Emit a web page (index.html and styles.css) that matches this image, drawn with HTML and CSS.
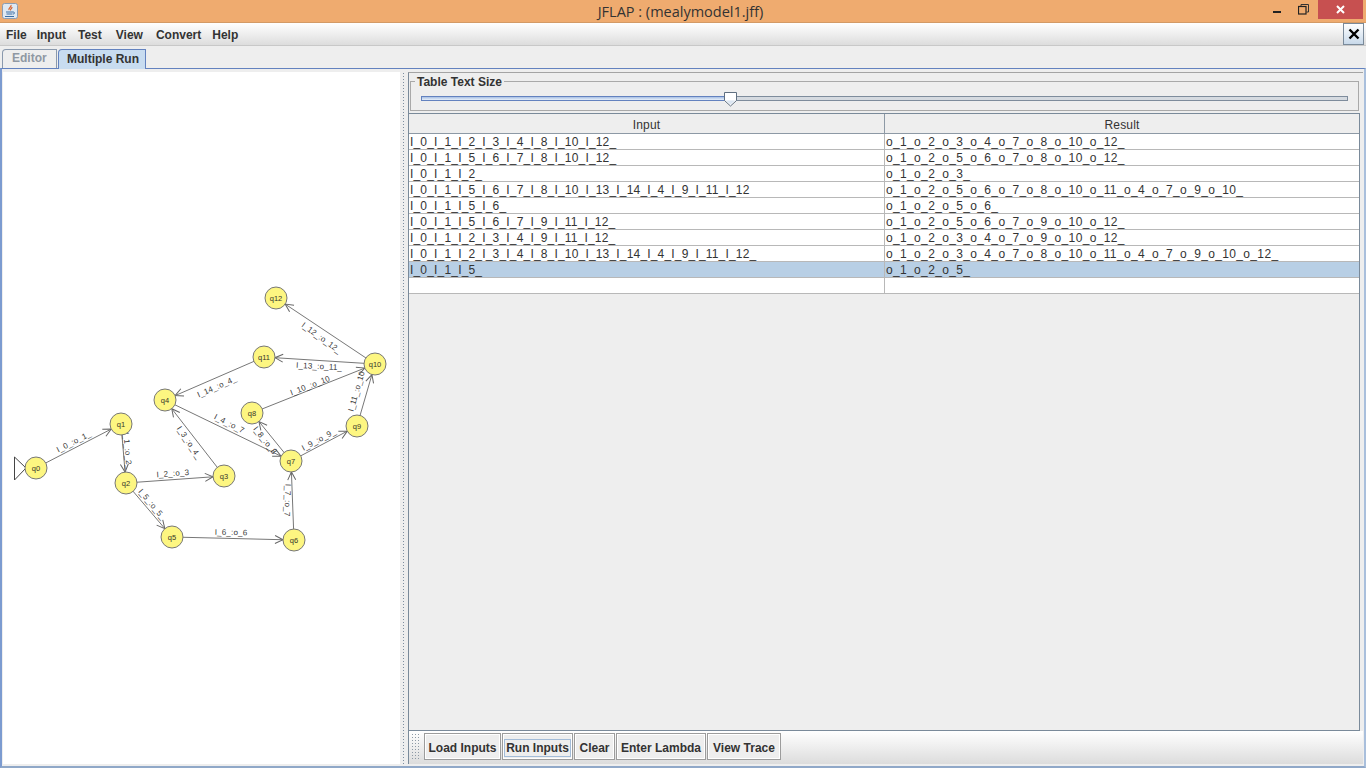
FILE: index.html
```html
<!DOCTYPE html>
<html lang="en">
<head>
  <meta charset="UTF-8">
  <title>JFLAP : (mealymodel1.jff)</title>
  <link rel="stylesheet" href="styles.css">
</head>
<body>
  <div class="window">
    <div class="title-bar">
      <svg class="app-icon" width="16" height="16" viewBox="0 0 16 16">
        <rect x="0.5" y="0.5" width="15" height="15" rx="2" fill="#dfe8f2" stroke="#8b9db3"/>
        <path d="M9 2c1 2-3 3-2 5M10 4c0 2-2 2-1.500 3.500" fill="none" stroke="#d8602a" stroke-width="1.200"/>
        <path d="M4 9h7M4.500 11h6M3 13.500h9" fill="none" stroke="#3a6ea5" stroke-width="1.200"/>
        <path d="M11 9c2 0 2 2 0 2" fill="none" stroke="#3a6ea5"/>
      </svg>
      <span class="title-text">JFLAP : (mealymodel1.jff)</span>
      <div class="win-controls">
        <span class="win-min"></span>
        <svg class="win-restore" width="11" height="11" viewBox="0 0 11 11">
          <path d="M3 2.500V.5h7.500V8H8.500" fill="none" stroke="#333"/>
          <rect x="0.500" y="2.500" width="7.500" height="7.500" fill="none" stroke="#222" stroke-width="1.200"/>
        </svg>
        <span class="win-close">
          <svg width="9" height="9" viewBox="0 0 9 9"><path d="M1 1l7 7M8 1l-7 7" stroke="#fff" stroke-width="2"/></svg>
        </span>
      </div>
    </div>

    <div class="menu-bar">
      <span class="menu-item">File</span>
      <span class="menu-item">Input</span>
      <span class="menu-item">Test</span>
      <span class="menu-item">View</span>
      <span class="menu-item">Convert</span>
      <span class="menu-item">Help</span>
      <button class="close-doc">
        <svg width="12" height="12" viewBox="0 0 12 12"><path d="M1.500 1.500l9 9M10.500 1.500l-9 9" stroke="#000" stroke-width="2.400"/></svg>
      </button>
    </div>

    <div class="tab-row">
      <span class="tab tab-off">Editor</span>
      <span class="tab tab-on">Multiple Run</span>
    </div>

    <div class="tab-panel">
      <div class="canvas-pane">
        <svg class="diagram" width="397" height="693" viewBox="3 72 397 693">
          <defs>
            <marker id="arrow" markerUnits="userSpaceOnUse" orient="auto" overflow="visible" refX="0" refY="0" markerWidth="10" markerHeight="10">
              <path d="M-19,-4 L-11,0 L-19,4" fill="none" stroke="#666"/>
            </marker>
          </defs>

          <path class="start" d="M14.500 457 L26 468 L14.500 480 Z"/>

          <line class="edge" x1="36" y1="468" x2="121" y2="424"/>
          <line class="edge" x1="121" y1="424" x2="126" y2="483"/>
          <line class="edge" x1="126" y1="483" x2="224" y2="476"/>
          <line class="edge" x1="126" y1="483" x2="172" y2="537"/>
          <line class="edge" x1="224" y1="476" x2="165" y2="400"/>
          <line class="edge" x1="165" y1="400" x2="291" y2="461"/>
          <line class="edge" x1="172" y1="537" x2="294" y2="540"/>
          <line class="edge" x1="294" y1="540" x2="291" y2="461"/>
          <line class="edge" x1="291" y1="461" x2="252" y2="413"/>
          <line class="edge" x1="291" y1="461" x2="357" y2="426"/>
          <line class="edge" x1="252" y1="413" x2="375" y2="364"/>
          <line class="edge" x1="357" y1="426" x2="375" y2="364"/>
          <line class="edge" x1="375" y1="364" x2="264" y2="357"/>
          <line class="edge" x1="375" y1="364" x2="276" y2="298"/>
          <line class="edge" x1="264" y1="357" x2="165" y2="400"/>

          <text class="edge-label" transform="translate(75 444) rotate(-27)">I_0_:o_1_</text>
          <text class="edge-label" transform="translate(125 451) rotate(85)">I_1_:o_2_</text>
          <text class="edge-label" transform="translate(173 476) rotate(-4)">I_2_:o_3</text>
          <text class="edge-label" transform="translate(150 506) rotate(50)">I_5_:o_5_</text>
          <text class="edge-label" transform="translate(187 444) rotate(56)">I_3_:o_4_</text>
          <text class="edge-label" transform="translate(228 426) rotate(27)">I_4_:o_7</text>
          <text class="edge-label" transform="translate(231 535) rotate(1)">I_6_:o_6</text>
          <text class="edge-label" transform="translate(285 500) rotate(92)">I_7_:o_7</text>
          <text class="edge-label" transform="translate(263 442) rotate(52)">I_8_:o_8</text>
          <text class="edge-label" transform="translate(320 442) rotate(-28)">I_9_:o_9_</text>
          <text class="edge-label" transform="translate(311 388) rotate(-21)">I_10_:o_10</text>
          <text class="edge-label" transform="translate(359 392) rotate(-74)">I_11_:o_10</text>
          <text class="edge-label" transform="translate(320 340) rotate(36)">I_12_:o_12_</text>
          <text class="edge-label" transform="translate(319 369) rotate(3)">I_13_:o_11_</text>
          <text class="edge-label" transform="translate(218 389) rotate(-24)">I_14_:o_4_</text>

          <g class="node"><circle cx="36" cy="468" r="11"/><text x="36" y="470.500">q0</text></g>
          <g class="node"><circle cx="121" cy="424" r="11"/><text x="121" y="426.500">q1</text></g>
          <g class="node"><circle cx="126" cy="483" r="11"/><text x="126" y="485.500">q2</text></g>
          <g class="node"><circle cx="224" cy="476" r="11"/><text x="224" y="478.500">q3</text></g>
          <g class="node"><circle cx="165" cy="400" r="11"/><text x="165" y="402.500">q4</text></g>
          <g class="node"><circle cx="172" cy="537" r="11"/><text x="172" y="539.500">q5</text></g>
          <g class="node"><circle cx="294" cy="540" r="11"/><text x="294" y="542.500">q6</text></g>
          <g class="node"><circle cx="291" cy="461" r="11"/><text x="291" y="463.500">q7</text></g>
          <g class="node"><circle cx="252" cy="413" r="11"/><text x="252" y="415.500">q8</text></g>
          <g class="node"><circle cx="357" cy="426" r="11"/><text x="357" y="428.500">q9</text></g>
          <g class="node"><circle cx="375" cy="364" r="11"/><text x="375" y="366.500">q10</text></g>
          <g class="node"><circle cx="264" cy="357" r="11"/><text x="264" y="359.500">q11</text></g>
          <g class="node"><circle cx="276" cy="298" r="11"/><text x="276" y="300.500">q12</text></g>
        </svg>
      </div>

      <div class="divider"></div>

      <div class="run-pane">
        <fieldset class="size-box">
          <legend>Table Text Size</legend>
          <div class="slider">
            <div class="slider-fill"></div>
            <svg class="slider-thumb" width="15" height="16" viewBox="0 0 15 16">
              <path d="M1.500 1.500h12v8l-6 5.500-6-5.500z" fill="#fff" stroke="#5f6f80"/>
              <path d="M3 9.500h9l-4.500 4z" fill="#dbe6f2"/>
            </svg>
          </div>
        </fieldset>

        <div class="table-wrap">
          <div class="table-head">
            <div class="cell-head">Input</div>
            <div class="cell-head">Result</div>
          </div>
          <div class="table-row"><div class="cell">I_0_I_1_I_2_I_3_I_4_I_8_I_10_I_12_</div><div class="cell">o_1_o_2_o_3_o_4_o_7_o_8_o_10_o_12_</div></div>
          <div class="table-row"><div class="cell">I_0_I_1_I_5_I_6_I_7_I_8_I_10_I_12_</div><div class="cell">o_1_o_2_o_5_o_6_o_7_o_8_o_10_o_12_</div></div>
          <div class="table-row"><div class="cell">I_0_I_1_I_2_</div><div class="cell">o_1_o_2_o_3_</div></div>
          <div class="table-row"><div class="cell">I_0_I_1_I_5_I_6_I_7_I_8_I_10_I_13_I_14_I_4_I_9_I_11_I_12</div><div class="cell">o_1_o_2_o_5_o_6_o_7_o_8_o_10_o_11_o_4_o_7_o_9_o_10_</div></div>
          <div class="table-row"><div class="cell">I_0_I_1_I_5_I_6_</div><div class="cell">o_1_o_2_o_5_o_6_</div></div>
          <div class="table-row"><div class="cell">I_0_I_1_I_5_I_6_I_7_I_9_I_11_I_12_</div><div class="cell">o_1_o_2_o_5_o_6_o_7_o_9_o_10_o_12_</div></div>
          <div class="table-row"><div class="cell">I_0_I_1_I_2_I_3_I_4_I_9_I_11_I_12_</div><div class="cell">o_1_o_2_o_3_o_4_o_7_o_9_o_10_o_12_</div></div>
          <div class="table-row"><div class="cell">I_0_I_1_I_2_I_3_I_4_I_8_I_10_I_13_I_14_I_4_I_9_I_11_I_12_</div><div class="cell">o_1_o_2_o_3_o_4_o_7_o_8_o_10_o_11_o_4_o_7_o_9_o_10_o_12_</div></div>
          <div class="table-row selected"><div class="cell">I_0_I_1_I_5_</div><div class="cell">o_1_o_2_o_5_</div></div>
          <div class="table-row"><div class="cell"></div><div class="cell"></div></div>
        </div>

        <div class="tool-bar">
          <span class="grip"></span>
          <button class="tool-btn btn-load">Load Inputs</button>
          <button class="tool-btn btn-run"><span class="focus-ring">Run Inputs</span></button>
          <button class="tool-btn btn-clear">Clear</button>
          <button class="tool-btn btn-lambda">Enter Lambda</button>
          <button class="tool-btn btn-trace">View Trace</button>
        </div>
      </div>
    </div>
  </div>
</body>
</html>
```

FILE: styles.css
```css
html, body {
  margin: 0;
  height: 100%;
  overflow: hidden;
}

body {
  font-family: "Liberation Sans", Arial, sans-serif;
  font-size: 12px;
  color: #333;
  background: #eeeeee;
}

.window {
  display: flex;
  flex-direction: column;
  width: 1366px;
  height: 768px;
}

/* title bar */
.title-bar {
  position: relative;
  display: flex;
  align-items: flex-start;
  justify-content: center;
  height: 22px;
  flex: none;
  padding-right: 5px;
  background: #efab6f;
  border-bottom: 1px solid #d39a66;
}

.app-icon {
  position: absolute;
  left: 2px;
  top: 3px;
}

.title-text {
  font-family: "Open Sans", sans-serif;
  font-size: 14.500px;
  line-height: 24px;
  color: #333;
}

.win-controls {
  position: absolute;
  right: 3px;
  top: 0;
  display: flex;
  align-items: flex-start;
}

.win-min {
  width: 8px;
  height: 2px;
  margin: 11px 17px 0 0;
  background: #222;
}

.win-restore {
  margin: 4px 9px 0 0;
}

.win-close {
  display: flex;
  align-items: center;
  justify-content: center;
  width: 45px;
  height: 19px;
  background: #c75050;
}

/* menu */
.menu-bar {
  display: flex;
  align-items: center;
  flex: none;
  height: 22px;
  padding-left: 6px;
  background: linear-gradient(#ffffff, #dddddd);
  border-bottom: 1px solid #c8c8c8;
}

.menu-item {
  padding-top: 2px;
  font-weight: bold;
  color: #333;
}

.menu-item:nth-child(1) { margin-right: 10px; }
.menu-item:nth-child(2) { margin-right: 12px; }
.menu-item:nth-child(3) { margin-right: 14px; }
.menu-item:nth-child(4) { margin-right: 13px; }
.menu-item:nth-child(5) { margin-right: 11px; }

.close-doc {
  display: flex;
  align-items: center;
  justify-content: center;
  width: 21px;
  height: 22px;
  margin-left: auto;
  margin-right: 2px;
  padding: 0;
  border: 1px solid #7a8a9a;
  background: linear-gradient(#ffffff, #c8d9ea);
}

/* tabs */
.tab-row {
  display: flex;
  align-items: flex-end;
  flex: none;
  height: 22px;
  padding-left: 2px;
}

.tab {
  box-sizing: border-box;
  height: 19px;
  padding: 0 9px;
  font-weight: bold;
  line-height: 17px;
  white-space: nowrap;
  border: 1px solid #6382bf;
  border-bottom: none;
  border-radius: 4px 0 0 0;
}

.tab-off {
  width: 55px;
  border-color: #8a99ad;
  color: #8f98a3;
  background: #eeeeee;
}

.tab-on {
  width: 88px;
  height: 20px;
  margin: 0 0 -1px 1px;
  padding: 0 8px;
  line-height: 19px;
  background: #c8dcf0;
  color: #333;
  position: relative;
}

.tab-panel {
  display: flex;
  flex: 1;
  min-height: 0;
  box-sizing: border-box;
  padding: 3px 1px 2px 0;
  border-top: 1px solid #6382bf;
  border-left: 2px solid #7c9bd0;
  border-right: 2px solid #a9bfdc;
  border-bottom: 2px solid #90a8c8;
}

/* diagram */
.canvas-pane {
  flex: none;
  width: 397px;
  margin-left: 1px;
  background: #ffffff;
}

.diagram {
  display: block;
}

.start {
  fill: #ffffff;
  stroke: #444;
}

.edge {
  stroke: #777;
  stroke-width: 1;
  marker-end: url(#arrow);
}

.edge-label {
  font-size: 8px;
  letter-spacing: 0.2px;
  text-anchor: middle;
  fill: #222;
  opacity: 0.9;
}

.node circle {
  fill: #fdf681;
  stroke: #777;
}

.node text {
  font-size: 7.500px;
  text-anchor: middle;
  fill: #222;
  opacity: 0.9;
}

/* split divider */
.divider {
  flex: none;
  width: 7px;
  margin-right: 1px;
  background: radial-gradient(circle, #7d8ea0 0.6px, transparent 1px) 2px 0 / 3px 3px repeat-y;
}

/* right side */
.run-pane {
  display: flex;
  flex-direction: column;
  flex: 1;
  min-width: 0;
  border-top: 1px solid #a4a4a4;
  border-left: 1px solid #7a8a9a;
}

.size-box {
  box-sizing: border-box;
  height: 37px;
  margin: 1px 4px 2px 1px;
  padding: 0 10px;
  border: 1px solid #a9a9a9;
  flex: none;
  min-width: 0;
}

.size-box legend {
  margin-left: -6px;
  padding: 2px 2px 0;
  font-weight: bold;
  line-height: 12px;
}

.slider {
  position: relative;
  height: 3px;
  margin-top: 8px;
  background: #d5dae0;
  border: 1px solid #7e8c9c;
}

.slider-fill {
  width: 33.400%;
  height: 100%;
  background: linear-gradient(#a8c0e4, #e8f0fa);
  box-shadow: 0 0 0 1px #6382bf;
}

.slider-thumb {
  position: absolute;
  left: 301px;
  top: -6px;
}

.table-wrap {
  flex: 1;
  min-height: 0;
  margin-right: 3px;
  border-top: 1px solid #7a8a9a;
  border-right: 1px solid #7a8a9a;
  border-bottom: 1px solid #7a8a9a;
}

.table-head,
.table-row {
  display: grid;
  grid-template-columns: 476px 1fr;
}

.table-head {
  height: 19px;
  border-bottom: 1px solid #8d99a5;
}

.cell-head {
  text-align: center;
  line-height: 23px;
  letter-spacing: 0.2px;
  border-right: 1px solid #8d99a5;
}

.cell-head:last-child {
  border-right: none;
}

.table-row {
  box-sizing: border-box;
  height: 16px;
  background: #ffffff;
  border-bottom: 1px solid #b8b8b8;
}

.cell {
  box-sizing: border-box;
  padding-left: 1px;
  line-height: 16px;
  font-size: 12px;
  letter-spacing: 0.18px;
  white-space: nowrap;
  overflow: hidden;
  border-right: 1px solid #b8b8b8;
}

.cell:last-child {
  letter-spacing: 0.35px;
  border-right: none;
}

.selected {
  background: #b8cfe5;
}

.tool-bar {
  display: flex;
  align-items: flex-start;
  flex: none;
  height: 33px;
  box-sizing: border-box;
  padding-top: 2px;
  padding-left: 2px;
  background: linear-gradient(#ffffff, #dcdcdc);
}

.grip {
  width: 9px;
  height: 27px;
  margin-right: 4px;
  background: radial-gradient(circle, #8d99a5 0.6px, transparent 1px) 0 0 / 3px 3px;
}

.tool-btn {
  box-sizing: border-box;
  height: 27px;
  margin-right: 1px;
  padding: 2px 0 0;
  font-family: "Liberation Sans", Arial, sans-serif;
  font-size: 12px;
  font-weight: bold;
  color: #333;
  background: #eeeeee;
  border: 1px solid #9c9c9c;
  box-shadow: inset 0 0 0 1px #ffffff;
}

.btn-load { width: 77px; }
.btn-run { width: 71px; }
.btn-clear { width: 41px; }
.btn-lambda { width: 90px; }
.btn-trace { width: 74px; }

.focus-ring {
  display: inline-block;
  padding: 1px 1px;
  border: 1px solid #a3bcd8;
}
```
